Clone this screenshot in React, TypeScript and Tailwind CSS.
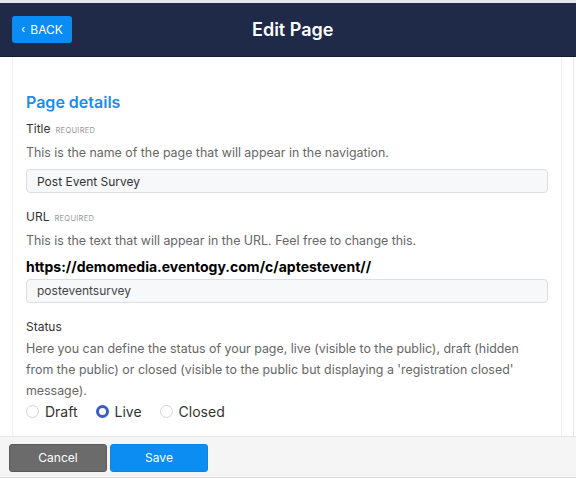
import React, { useState } from 'react';

const font = { fontFamily: 'Inter, "Noto Sans", sans-serif' };

const Label: React.FC<{ text: string; required?: boolean }> = ({ text, required }) => (
    <div className="flex items-baseline h-4 text-[12px] leading-4 text-[#333]">
        {text}
        {required && <span className="ml-[5px] text-[7.5px] tracking-[0.3px] text-[#999] uppercase">Required</span>}
    </div>
);

const Radio: React.FC<{ label: string; checked: boolean; onClick: () => void }> = ({ label, checked, onClick }) => (
    <label className="flex items-center cursor-pointer mr-[18px]" onClick={onClick}>
        <span
            className={
                checked
                    ? 'w-[13px] h-[13px] rounded-full border-[3.5px] border-[#3a5cc4] bg-white'
                    : 'w-[13px] h-[13px] rounded-full border border-[#d4d4d4] bg-white'
            }
        />
        <span className="ml-[6px] text-[14px] text-[#333]">{label}</span>
    </label>
);

export default function App() {
    const [status, setStatus] = useState('live');
    const [title, setTitle] = useState('Post Event Survey');
    const [slug, setSlug] = useState('posteventsurvey');

    return (
        <div className="w-[576px] h-[478px] bg-white flex flex-col overflow-hidden" style={font}>
            {/* header */}
            <div className="h-[57px] border-t-[3px] border-[#e6e7eb] bg-[#1f2a48] border-b border-b-[#141c33] flex items-center relative shrink-0">
                <button className="ml-3 h-[27px] w-[60px] rounded-[3px] bg-[#0a8cf2] text-white text-[12px] flex items-center justify-center gap-[5px]">
                    <span className="text-[11px] leading-none">‹</span> BACK
                </button>
                <h1 className="absolute left-[252px] text-[18px] font-semibold text-white">Edit Page</h1>
            </div>

            {/* body */}
            <div className="flex-1 flex border-r border-[#e8e8e8] mr-[2px]">
                <div className="ml-3 w-[550px] border-l border-r border-[#f0f0f0] px-[13px] pt-[33px]">
                    <h2 className="text-[16px] leading-6 font-semibold text-[#1b8ceb]">Page details</h2>

                    <div className="mt-[7px]">
                        <Label text="Title" required />
                    </div>
                    <p className="mt-[6px] text-[12.4px] leading-5 text-[#666]">This is the name of the page that will appear in the navigation.</p>
                    <input
                        value={title}
                        onChange={e => setTitle(e.target.value)}
                        className="mt-[6px] w-[522px] h-6 rounded-[4px] border border-[#dedede] bg-[#f7f8fa] px-[10px] text-[12px] text-[#333] outline-none"
                    />

                    <div className="mt-4">
                        <Label text="URL" required />
                    </div>
                    <p className="mt-[6px] text-[12.4px] leading-5 text-[#666]">This is the text that will appear in the URL. Feel free to change this.</p>
                    <div className="mt-[6px] text-[14px] leading-5 font-bold text-black">https://demomedia.eventogy.com/c/aptestevent//</div>
                    <input
                        value={slug}
                        onChange={e => setSlug(e.target.value)}
                        className="w-[522px] h-6 rounded-[4px] border border-[#dedede] bg-[#f7f8fa] px-[10px] text-[12px] text-[#444] outline-none"
                    />

                    <div className="mt-4">
                        <Label text="Status" />
                    </div>
                    <p className="mt-[3px] text-[12.4px] leading-[21px] text-[#666]">
                        Here you can define the status of your page, live (visible to the public), draft (hidden from the public) or closed (visible to the public but displaying a 'registration closed' message).
                    </p>
                    <div className="flex items-center h-5 mt-px">
                        <Radio label="Draft" checked={status === 'draft'} onClick={() => setStatus('draft')} />
                        <Radio label="Live" checked={status === 'live'} onClick={() => setStatus('live')} />
                        <Radio label="Closed" checked={status === 'closed'} onClick={() => setStatus('closed')} />
                    </div>
                </div>
            </div>

            {/* footer */}
            <div className="h-[42px] shrink-0 bg-[#f5f5f5] border-t border-[#e6e6e6] border-b border-b-[#dcdcdc] flex items-start pt-[7px] pl-[9px] gap-[3px]">
                <button className="w-[98px] h-[28px] rounded-[3px] bg-[#6b6b6b] border border-[#5a5a5a] text-white text-[12px]">Cancel</button>
                <button className="w-[98px] h-[28px] rounded-[3px] bg-[#0b8df2] border border-[#0a84e6] text-white text-[12px]">Save</button>
            </div>
        </div>
    );
}
